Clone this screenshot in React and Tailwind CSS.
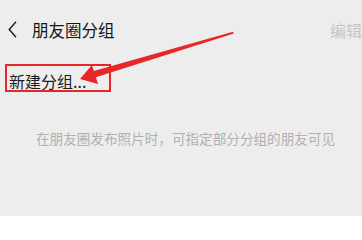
import React from "react";

export default function App() {
  return (
    <div
      className="relative w-[362px] h-[216px] overflow-hidden bg-[#ededed]"
      style={{ fontFamily: '"Noto Sans CJK SC", "Noto Sans", sans-serif' }}
    >
      <div className="flex items-center h-[58px] pl-[8px]">
        <svg width="9" height="17" viewBox="0 0 9 17" className="shrink-0">
          <path d="M8 0.8 L1.2 8.5 L8 16.2" fill="none" stroke="#1a1a1a" strokeWidth="1.4" />
        </svg>
        <div className="ml-[15px] text-[16.5px] leading-[20px] text-[#161616] mt-[2px]">朋友圈分组</div>
        <div className="ml-auto w-[32px] text-[16px] leading-[20px] text-[#c6c6c6] whitespace-nowrap mt-[2px]">编辑</div>
      </div>
      <div className="ml-[5px] mt-[6px] w-[106px] h-[28px] border-2 border-[#e8262a] flex items-end pl-[2px]">
        <span className="text-[16px] leading-[17px] text-[#1c1c1c] whitespace-nowrap">新建分组...</span>
      </div>
      <div className="mt-[38px] pl-[36px] text-[13.6px] leading-[16px] text-[#b0b0b0] whitespace-nowrap">
        在朋友圈发布照片时，可指定部分分组的朋友可见
      </div>
      <svg
        className="absolute left-0 top-0 pointer-events-none"
        width="362"
        height="216"
        viewBox="0 0 362 216"
      >
        <polygon points="92,71.5 233,31.8 233.8,33.6 95,77.5" fill="#e8262a" />
        <polygon points="80,79 92,65 98,84" fill="#e8262a" />
      </svg>
    </div>
  );
}
